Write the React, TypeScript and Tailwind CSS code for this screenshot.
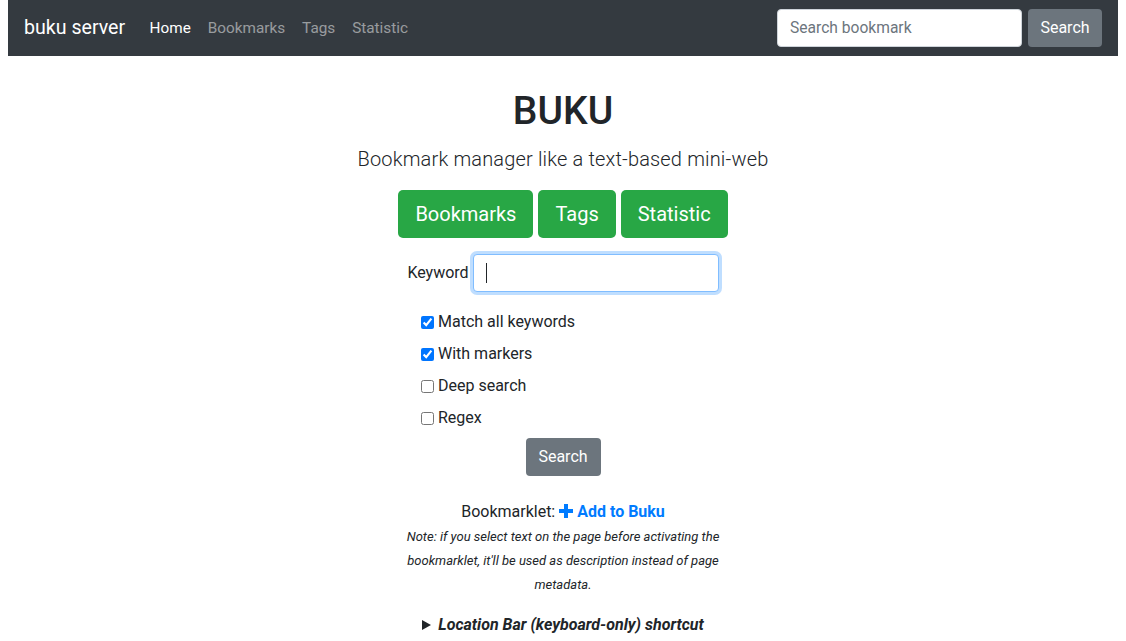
import React from "react";

const navLink = "text-[15.3px] leading-6 px-[8.5px]";

function PlusIcon() {
  return (
    <svg width="14" height="14" viewBox="0 0 14 14" className="inline-block align-[-1px]" aria-hidden="true">
      <path d="M5 0h4v5h5v4H9v5H5V9H0V5h5z" fill="#007bff" />
    </svg>
  );
}

export default function App() {
  return (
    <div className="px-2 font-['Roboto','Liberation_Sans',sans-serif] text-[#212529]">
      <nav className="flex h-14 items-center justify-between bg-[#343a40] px-4">
        <div className="flex items-center">
          <span className="mr-4 text-[19.6px] leading-[30px] text-white">buku server</span>
          <div className="flex">
            <span className={`${navLink} text-white`}>Home</span>
            <span className={`${navLink} text-white/50`}>Bookmarks</span>
            <span className={`${navLink} text-white/50`}>Tags</span>
            <span className={`${navLink} text-white/50`}>Statistic</span>
          </div>
        </div>
        <div className="flex items-center gap-[6px]">
          <input
            placeholder="Search bookmark"
            className="h-[38px] w-[245px] rounded border border-[#ced4da] bg-white px-3 text-[15.6px] text-[#495057] placeholder:text-[#6c757d] outline-none"
          />
          <button className="h-[38px] w-[74px] rounded bg-[#6c757d] text-[16px] text-white">Search</button>
        </div>
      </nav>

      <main className="flex flex-col items-center pt-[31px]">
        <h1 className="text-[39px] font-medium leading-[48px]">BUKU</h1>
        <p className="mt-[9px] text-[20px] font-light leading-[30px] tracking-[0.16px]">
          Bookmark manager like a text-based mini-web
        </p>

        <div className="mt-4 flex gap-[5px]">
          {["Bookmarks", "Tags", "Statistic"].map((b) => (
            <button
              key={b}
              className="h-12 rounded-[5px] bg-[#28a745] px-[17px] text-[20px] leading-[30px] text-white"
            >
              {b}
            </button>
          ))}
        </div>

        <div className="mt-4 flex items-center gap-[4px]">
          <label className="text-[16px]">Keyword</label>
          <div className="flex h-[38px] w-[246px] items-center rounded border border-[#80bdff] bg-white px-3 shadow-[0_0_0_3px_rgba(0,123,255,0.25)]">
            <span className="h-5 w-px bg-[#212529]" />
          </div>
        </div>

        <div className="mt-[14px] flex w-[284px] flex-col">
          {[
            ["Match all keywords", true],
            ["With markers", true],
            ["Deep search", false],
            ["Regex", false],
          ].map(([label, checked]) => (
            <label key={label as string} className="flex h-8 items-center gap-[4px] text-[16px]">
              <input type="checkbox" defaultChecked={checked as boolean} className="h-[13px] w-[13px] accent-[#0075ff]" />
              {label as string}
            </label>
          ))}
        </div>

        <button className="mt-[4px] h-[38px] w-[75px] rounded bg-[#6c757d] text-[16px] text-white">Search</button>

        <p className="mt-[24px] text-[16px] leading-6">
          Bookmarklet: <span className="font-bold text-[#007bff]"><PlusIcon /> Add to Buku</span>
        </p>
        <p className="mt-[1px] w-[336px] text-center text-[13px] italic leading-6">
          Note: if you select text on the page before activating the bookmarklet, it'll be used as description instead of page metadata.
        </p>

        <div className="mt-[16px] flex items-center gap-[7px] text-[16px] font-bold italic leading-6">
          <svg width="9" height="10" viewBox="0 0 9 10" aria-hidden="true">
            <path d="M0 0L9 5L0 10z" fill="#212529" />
          </svg>
          Location Bar (keyboard-only) shortcut
        </div>
      </main>
    </div>
  );
}
